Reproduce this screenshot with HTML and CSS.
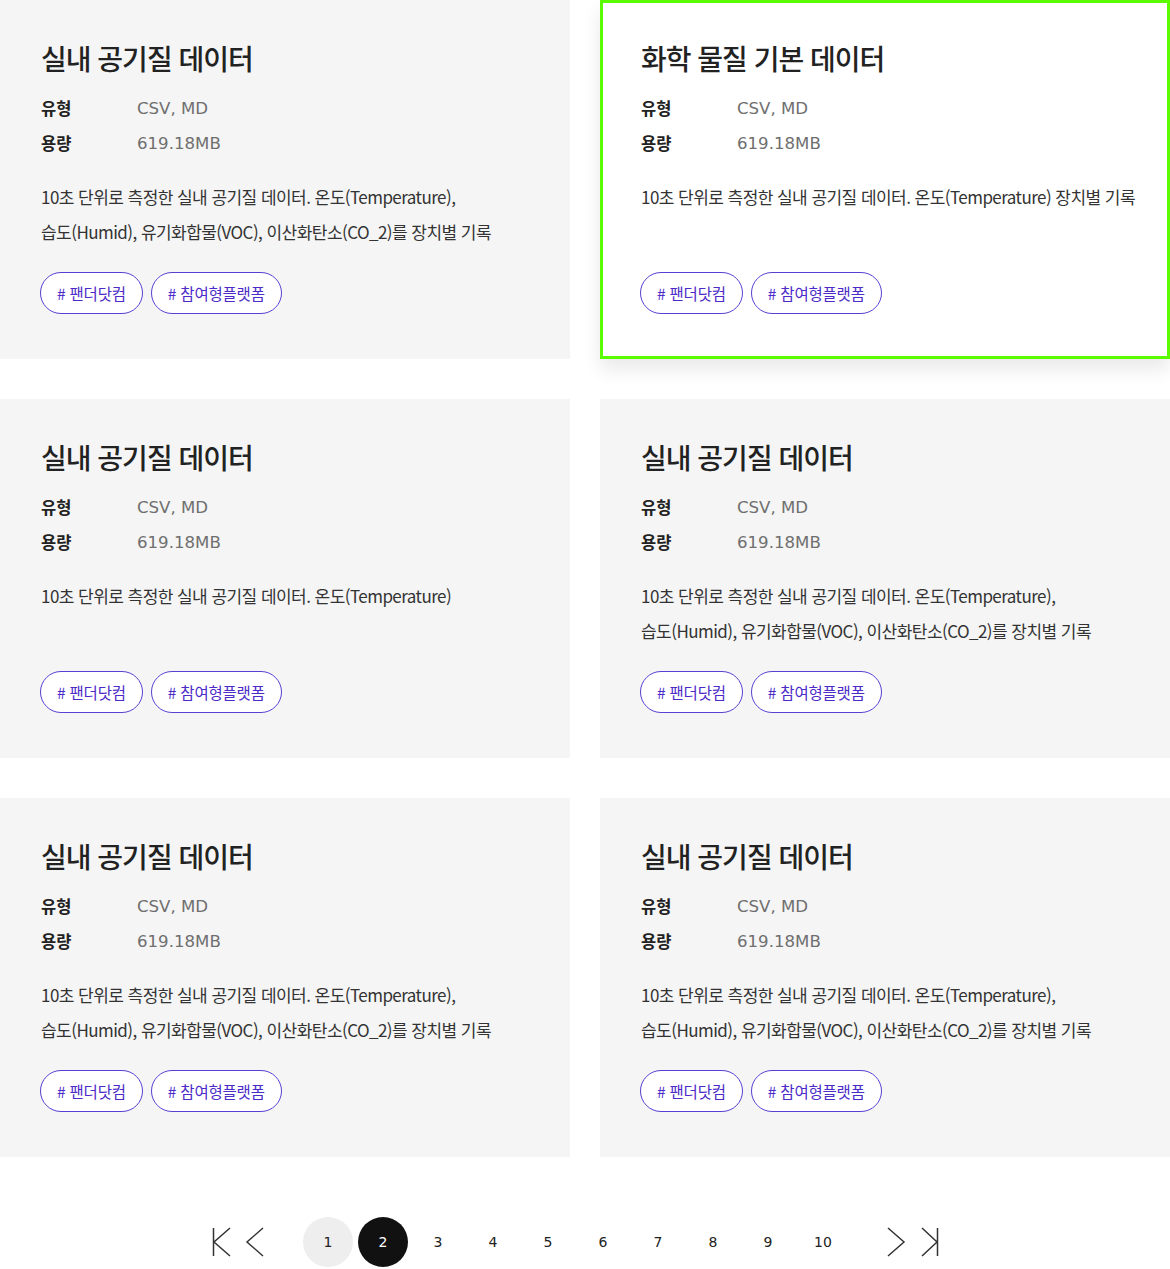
FILE: index.html
```html
<!DOCTYPE html>
<html lang="ko">
<head>
<meta charset="utf-8">
<title>데이터 목록</title>
<link rel="stylesheet" href="styles.css">
</head>
<body>
<main class="page">
  <section class="grid">
    <article class="card">
      <h2 class="card-title">실내 공기질 데이터</h2>
      <dl class="info">
        <div class="info-row"><dt>유형</dt><dd>CSV, MD</dd></div>
        <div class="info-row"><dt>용량</dt><dd>619.18MB</dd></div>
      </dl>
      <p class="desc">10초 단위로 측정한 실내 공기질 데이터. 온도(Temperature),<br>습도(Humid), 유기화합물(VOC), 이산화탄소(CO_2)를 장치별 기록</p>
      <div class="tags"><span class="tag"># 팬더닷컴</span><span class="tag"># 참여형플랫폼</span></div>
    </article>
    <article class="card card-active">
      <h2 class="card-title">화학 물질 기본 데이터</h2>
      <dl class="info">
        <div class="info-row"><dt>유형</dt><dd>CSV, MD</dd></div>
        <div class="info-row"><dt>용량</dt><dd>619.18MB</dd></div>
      </dl>
      <p class="desc">10초 단위로 측정한 실내 공기질 데이터. 온도(Temperature) 장치별 기록</p>
      <div class="tags"><span class="tag"># 팬더닷컴</span><span class="tag"># 참여형플랫폼</span></div>
    </article>
    <article class="card">
      <h2 class="card-title">실내 공기질 데이터</h2>
      <dl class="info">
        <div class="info-row"><dt>유형</dt><dd>CSV, MD</dd></div>
        <div class="info-row"><dt>용량</dt><dd>619.18MB</dd></div>
      </dl>
      <p class="desc">10초 단위로 측정한 실내 공기질 데이터. 온도(Temperature)</p>
      <div class="tags"><span class="tag"># 팬더닷컴</span><span class="tag"># 참여형플랫폼</span></div>
    </article>
    <article class="card">
      <h2 class="card-title">실내 공기질 데이터</h2>
      <dl class="info">
        <div class="info-row"><dt>유형</dt><dd>CSV, MD</dd></div>
        <div class="info-row"><dt>용량</dt><dd>619.18MB</dd></div>
      </dl>
      <p class="desc">10초 단위로 측정한 실내 공기질 데이터. 온도(Temperature),<br>습도(Humid), 유기화합물(VOC), 이산화탄소(CO_2)를 장치별 기록</p>
      <div class="tags"><span class="tag"># 팬더닷컴</span><span class="tag"># 참여형플랫폼</span></div>
    </article>
    <article class="card">
      <h2 class="card-title">실내 공기질 데이터</h2>
      <dl class="info">
        <div class="info-row"><dt>유형</dt><dd>CSV, MD</dd></div>
        <div class="info-row"><dt>용량</dt><dd>619.18MB</dd></div>
      </dl>
      <p class="desc">10초 단위로 측정한 실내 공기질 데이터. 온도(Temperature),<br>습도(Humid), 유기화합물(VOC), 이산화탄소(CO_2)를 장치별 기록</p>
      <div class="tags"><span class="tag"># 팬더닷컴</span><span class="tag"># 참여형플랫폼</span></div>
    </article>
    <article class="card">
      <h2 class="card-title">실내 공기질 데이터</h2>
      <dl class="info">
        <div class="info-row"><dt>유형</dt><dd>CSV, MD</dd></div>
        <div class="info-row"><dt>용량</dt><dd>619.18MB</dd></div>
      </dl>
      <p class="desc">10초 단위로 측정한 실내 공기질 데이터. 온도(Temperature),<br>습도(Humid), 유기화합물(VOC), 이산화탄소(CO_2)를 장치별 기록</p>
      <div class="tags"><span class="tag"># 팬더닷컴</span><span class="tag"># 참여형플랫폼</span></div>
    </article>
  </section>

  <nav class="pager" aria-label="페이지">
    <a class="pager-arrow" href="#" aria-label="처음">
      <svg width="34" height="50" viewBox="0 0 34 50"><path d="M9.5 11v28M26 11L10 25l16 14" fill="none" stroke="#333" stroke-width="1.5"/></svg>
    </a>
    <a class="pager-arrow" href="#" aria-label="이전">
      <svg width="34" height="50" viewBox="0 0 34 50"><path d="M25 11L9 25l16 14" fill="none" stroke="#333" stroke-width="1.5"/></svg>
    </a>
    <div class="pager-pages">
      <a class="page-num page-visited" href="#">1</a>
      <a class="page-num page-current" href="#">2</a>
      <a class="page-num" href="#">3</a>
      <a class="page-num" href="#">4</a>
      <a class="page-num" href="#">5</a>
      <a class="page-num" href="#">6</a>
      <a class="page-num" href="#">7</a>
      <a class="page-num" href="#">8</a>
      <a class="page-num" href="#">9</a>
      <a class="page-num" href="#">10</a>
    </div>
    <a class="pager-arrow" href="#" aria-label="다음">
      <svg width="34" height="50" viewBox="0 0 34 50"><path d="M9 11l16 14L9 39" fill="none" stroke="#333" stroke-width="1.5"/></svg>
    </a>
    <a class="pager-arrow" href="#" aria-label="마지막">
      <svg width="34" height="50" viewBox="0 0 34 50"><path d="M9 11l15 14L9 39M24.5 11v28" fill="none" stroke="#333" stroke-width="1.5"/></svg>
    </a>
  </nav>
</main>
</body>
</html>
```

FILE: styles.css
```css
* { box-sizing: border-box; }

html, body {
  margin: 0;
  padding: 0;
  background: #fff;
}

body {
  font-family: "Noto Sans CJK KR", "Noto Sans", sans-serif;
  color: #222;
}

.page {
  width: 1170px;
}

.grid {
  display: grid;
  grid-template-columns: 570px 570px;
  column-gap: 30px;
  row-gap: 40px;
}

.card {
  background: #f5f5f5;
  padding: 38px 20px 45px 41px;
  height: 359px;
}

.card-active {
  background: #fff;
  box-shadow: inset 0 0 0 3px #5cfc00, 0 10px 18px rgba(0, 0, 0, 0.09);
  position: relative;
  z-index: 1;
}

.card-title {
  margin: 0;
  font-size: 28px;
  font-weight: 500;
  line-height: 40px;
  letter-spacing: -1px;
  color: #222;
}

.info {
  margin: 12.5px 0 0 0;
}

.info-row {
  display: flex;
  height: 35px;
  align-items: center;
}

.info-row dt {
  width: 96px;
  font-size: 16.5px;
  font-weight: 700;
  color: #222;
}

.info-row dd {
  margin: 0;
  font-family: "DejaVu Sans", Verdana, sans-serif;
  font-size: 16.6px;
  color: #6f6f6f;
  padding-top: 1px;
}

.desc {
  margin: 18.5px 0 0 0;
  min-height: 70px;
  font-size: 17px;
  line-height: 35px;
  letter-spacing: -0.55px;
  color: #333;
  white-space: nowrap;
}

.tags {
  display: flex;
  gap: 8px;
  margin-top: 23px;
  margin-left: -1px;
}

.tag {
  display: inline-flex;
  align-items: center;
  height: 42px;
  padding: 0 16px;
  border: 1px solid #5b3fd3;
  border-radius: 21px;
  background: #fff;
  font-size: 15.5px;
  color: #4c2bc8;
  letter-spacing: -0.2px;
}

.pager {
  display: flex;
  justify-content: center;
  align-items: center;
  padding: 60px 19px 0 0;
}

.pager-arrow {
  display: block;
  width: 34px;
  height: 50px;
}

.pager-arrow svg {
  display: block;
}

.pager-pages {
  display: flex;
  gap: 5px;
  margin: 0 31px;
}

.page-num {
  display: flex;
  align-items: center;
  justify-content: center;
  width: 50px;
  height: 50px;
  border-radius: 50%;
  font-family: "DejaVu Sans", Verdana, sans-serif;
  font-size: 14px;
  color: #222;
  text-decoration: none;
}

.page-visited {
  background: #eee;
}

.page-current {
  background: #111;
  color: #fff;
}
```
